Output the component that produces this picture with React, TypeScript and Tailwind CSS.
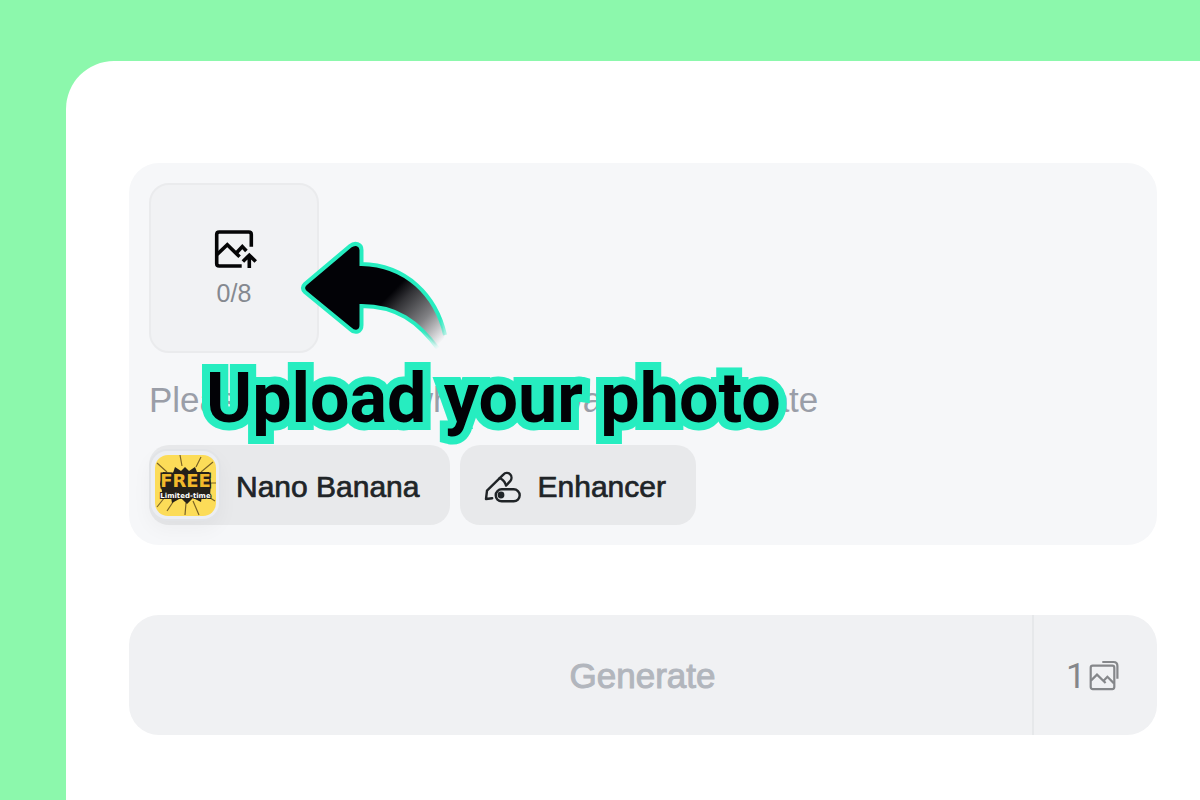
import { useState } from "react";

function UploadImageIcon() {
  return (
    <svg
      className="w-12 h-[42px]"
      viewBox="-4 0 48 42"
      fill="none"
      stroke="#050506"
      strokeWidth="3.6"
      aria-hidden="true"
    >
      <path d="M37.3 17.7V5.5Q37.3 3 34.8 3H5.2Q2.7 3 2.7 5.5V34.5Q2.7 37 5.2 37H27.7" />
      <path d="M2.7 25.8L13.3 15.8L25.6 27.8" />
      <path d="M22.6 23.8L28.3 17.6L32.4 22" />
      <path d="M35.3 39V26.4M28.9 32.6L35.3 26.2L41.7 32.6" />
    </svg>
  );
}

function EnhancerIcon() {
  return (
    <svg
      className="w-10 h-[38px]"
      viewBox="0 -4 40 38"
      fill="none"
      stroke="#202427"
      strokeWidth="2.4"
      strokeLinecap="round"
      strokeLinejoin="round"
      aria-hidden="true"
    >
      <path d="M9.2 28.2L3 29L4 20.7L20.3 4.6C22.3 2.4 25.3 2.4 27 4.2C29 6.2 28.9 9.2 27.2 11.2L23 15.6" />
      <path d="M16.6 8.2Q20.6 9.5 22.6 14.2" />
      <rect x="12.7" y="19.3" width="24" height="12" rx="6" />
      <circle cx="18" cy="25" r="2.2" fill="#202427" />
    </svg>
  );
}

function ImagesIcon() {
  return (
    <svg
      className="w-8 h-8"
      viewBox="0 0 32 32"
      fill="none"
      stroke="#85878a"
      strokeWidth="2.2"
      aria-hidden="true"
    >
      <rect x="2.7" y="6.7" width="23.6" height="23.4" rx="2" />
      <path d="M14.3 3H25.5Q29.4 3 29.4 7V19.7" />
      <path d="M2.9 21.6L9 15.6L17.6 24M15.6 21.8L19.4 17.8L26 24.4" />
    </svg>
  );
}

function FreeBadge() {
  return (
    <span className="flex items-center justify-center size-[72px] rounded-[18px] border-2 border-[#e2e4e7] bg-[#eceef2] shadow-[0_8px_20px_rgba(0,0,0,0.04)]">
      <svg className="size-[61px] rounded-[13px]" viewBox="0 0 61 61">
        <rect width="61" height="61" fill="#fcdc58" />
        <path
          d="M25 0L27 11M46 17L58 7M41 12L46 2M54 28H61M52 41L60 46M38 46L44 60M31 48L30 60M18 47L12 56M10 42L2 52M2 8L12 17"
          stroke="#7b6325"
          strokeWidth="1.2"
        />
        <path
          d="M8 17L18 18L20 12L26 16L30 12L34 16L40 12L42 17L54 17L56 28L55 41L47 41L46 47L38 43L32 49L26 43L17 48L16 42L6 42L7 36L5 29Z"
          fill="#25211a"
        />
        <text
          x="30.5"
          y="32"
          textAnchor="middle"
          fontFamily="DejaVu Sans, sans-serif"
          fontWeight="700"
          fontSize="18"
          fill="#f2b92b"
          stroke="#25211a"
          strokeWidth="3"
          paintOrder="stroke"
        >
          FREE
        </text>
        <text
          x="30.5"
          y="43"
          textAnchor="middle"
          fontFamily="DejaVu Sans, sans-serif"
          fontWeight="700"
          fontSize="7"
          fill="#ffffff"
          stroke="#25211a"
          strokeWidth="2"
          paintOrder="stroke"
        >
          Limited-time
        </text>
      </svg>
    </span>
  );
}

function CalloutArrow() {
  return (
    <svg
      className="absolute left-[161px] top-[67px] w-[170px] h-[130px]"
      viewBox="0 0 170 130"
      fill="none"
      aria-hidden="true"
    >
      <defs>
        <linearGradient id="arrow-fill" gradientUnits="userSpaceOnUse" x1="101" y1="63" x2="151" y2="112">
          <stop offset="0" stopColor="#020206" />
          <stop offset="0.2" stopColor="#020206" stopOpacity="0.8" />
          <stop offset="0.6" stopColor="#020206" stopOpacity="0.48" />
          <stop offset="1" stopColor="#020206" stopOpacity="0" />
        </linearGradient>
        <linearGradient id="arrow-line" gradientUnits="userSpaceOnUse" x1="130" y1="82" x2="152" y2="116">
          <stop offset="0.4" stopColor="#26edc0" />
          <stop offset="1" stopColor="#26edc0" stopOpacity="0" />
        </linearGradient>
      </defs>
      <path
        d="M149 120C128 91 106 76 71.5 76V95C71.5 102 65 104 60 99L15 62Q11 58 15 54L60 16C65 12 71.5 14 71.5 20V34C116 35 146 65 155 105"
        fill="url(#arrow-fill)"
        stroke="url(#arrow-line)"
        strokeWidth="4"
      />
    </svg>
  );
}

export default function App() {
  const [prompt, setPrompt] = useState("");

  return (
    <div className="min-h-screen flex bg-[#8cf8ac] pl-[66px] pt-[61px] font-['Liberation_Sans',Arial,sans-serif]">
      <main className="flex-1 min-w-0 bg-white rounded-tl-[48px] pl-[63px] pr-[43px] pt-[102px]">
        <section className="relative rounded-[30px] bg-[#f6f7f9] p-5">
          <button
            type="button"
            className="flex flex-col items-center justify-center size-[170px] rounded-[20px] border-2 border-[#eaebed] bg-[#f1f2f4] cursor-pointer"
            aria-label="Upload photo, 0/8"
          >
            <UploadImageIcon />
            <span className="mt-2 text-[25px] leading-7 text-[#858990]">0/8</span>
          </button>

          <textarea
            rows={1}
            value={prompt}
            onChange={(e) => setPrompt(e.target.value)}
            aria-label="Prompt"
            placeholder="Please describe what you want to generate"
            className="block w-full h-10 mt-[27px] mb-[25px] resize-none overflow-hidden bg-transparent text-[35px] leading-10 text-[#202427] placeholder:text-[#9a9ea8] outline-none"
          />

          <div className="flex flex-wrap gap-2.5">
            <button
              type="button"
              className="flex items-center gap-[15px] h-20 rounded-[20px] bg-[#e8e9eb] pr-[30px] text-[30px] text-[#202427] [-webkit-text-stroke:0.7px_#202427] cursor-pointer"
            >
              <FreeBadge />
              <span className="pt-0.5">Nano Banana</span>
            </button>
            <button
              type="button"
              className="flex items-center gap-[15px] h-20 rounded-[20px] bg-[#e8e9eb] pl-[23px] pr-[30px] text-[30px] text-[#202427] [-webkit-text-stroke:0.7px_#202427] cursor-pointer"
            >
              <EnhancerIcon />
              <span className="pt-0.5">Enhancer</span>
            </button>
          </div>

          <div className="absolute inset-0 pointer-events-none">
            <CalloutArrow />
            <p className="absolute left-[77px] top-[193px] whitespace-nowrap font-[Roboto,sans-serif] font-bold text-[70px] leading-[84px] text-[#020206] [-webkit-text-stroke:16px_#26edc0] [paint-order:stroke_fill]">
              Upload your photo
            </p>
          </div>
        </section>

        <div className="flex mt-[70px] h-[120px] rounded-[30px] bg-[#f0f1f3] overflow-hidden">
          <button
            type="button"
            disabled
            className="flex-1 pl-[124px] pt-0.5 text-[35px] text-[#b2b6bd] [-webkit-text-stroke:1px_#b2b6bd]"
          >
            Generate
          </button>
          <button
            type="button"
            aria-label="1 image"
            className="flex items-center gap-0.5 w-[125px] pl-8 border-l-2 border-[#e6e8ea] font-[Roboto,sans-serif] text-[35px] text-[#85878a] cursor-pointer"
          >
            <span className="pt-1">1</span>
            <ImagesIcon />
          </button>
        </div>
      </main>
    </div>
  );
}
